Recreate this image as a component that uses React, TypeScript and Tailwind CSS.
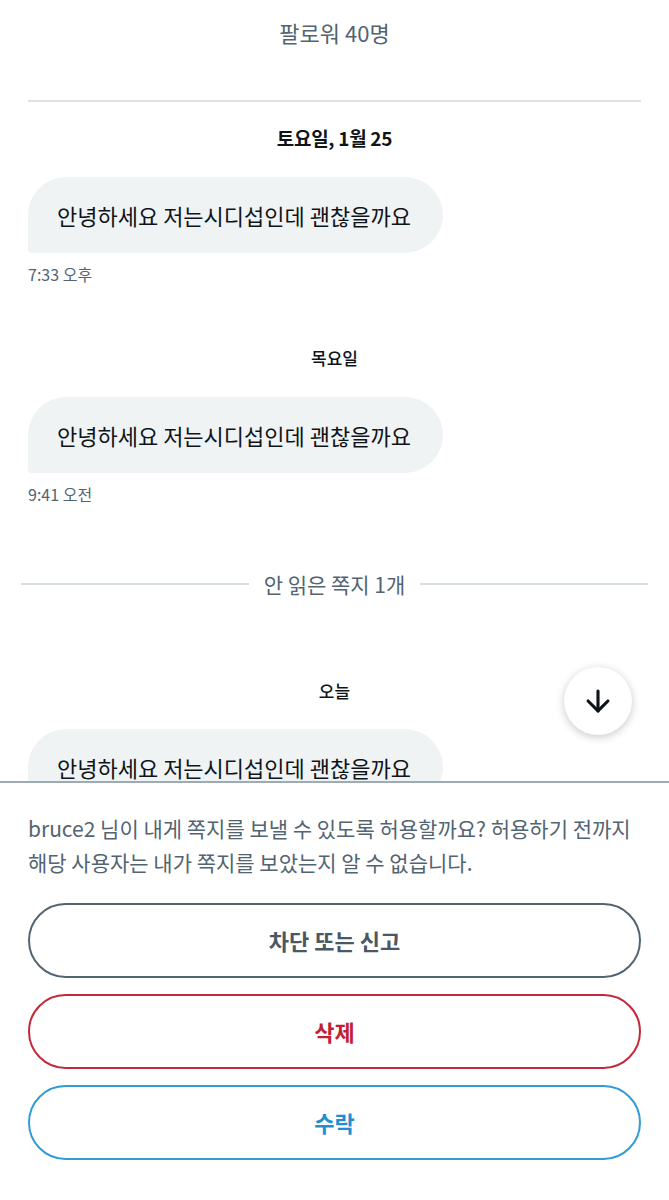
import React from 'react';
import { ArrowDown } from 'lucide-react';

const FONT = { fontFamily: '"Noto Sans CJK KR", "Noto Sans", sans-serif' };

const Bubble: React.FC<{ text: string }> = ({ text }) => (
  <div className="mx-[28px] flex h-[76px] w-[415px] items-center rounded-[38px] rounded-bl-[4px] bg-[#eff3f4] px-[29px]">
    <span className="whitespace-nowrap text-[22px] leading-none text-[#0f1419]">{text}</span>
  </div>
);

const DayLabel: React.FC<{ label: string; className?: string }> = ({ label, className }) => (
  <div className={'h-[28px] text-center leading-[28px] text-[#0f1419] ' + (className || '')}>
    {label}
  </div>
);

const Time: React.FC<{ time: string }> = ({ time }) => (
  <div className="mx-[28px] mt-[10px] h-[22px] text-[16px] leading-[22px] text-[#536471]">{time}</div>
);

const App: React.FC = () => {
  const msg = '안녕하세요 저는시디섭인데 괜찮을까요';

  return (
    <div className="flex h-[1200px] w-[669px] flex-col overflow-hidden bg-white" style={FONT}>
      <div className="relative flex-1 overflow-hidden">
        <div className="pt-[17px] text-center text-[22px] leading-[30px] text-[#536471]">팔로워 40명</div>
        <div className="mx-[28px] mt-[53px] h-[2px] bg-[#dfe3e6]" />

        <DayLabel label="토요일, 1월 25" className="mt-[22px] text-[19px] font-bold tracking-[-0.3px]" />
        <div className="mt-[25px]">
          <Bubble text={msg} />
        </div>
        <Time time="7:33 오후" />

        <DayLabel label="목요일" className="mt-[59px] text-[17px] font-medium" />
        <div className="mt-[25px]">
          <Bubble text={msg} />
        </div>
        <Time time="9:41 오전" />

        <div className="mt-[64px] flex h-[30px] items-center px-[21px]">
          <div className="h-[2px] flex-1 bg-[#d5dde2]" />
          <span className="px-[15px] text-[21px] leading-[30px] text-[#536471]">안 읽은 쪽지 1개</span>
          <div className="h-[2px] flex-1 bg-[#d5dde2]" />
        </div>

        <DayLabel label="오늘" className="mt-[78px] text-[17px] font-medium" />
        <div className="mt-[24px]">
          <Bubble text={msg} />
        </div>

        <button className="absolute left-[564px] top-[667px] flex h-[68px] w-[68px] items-center justify-center rounded-full bg-white shadow-[0_2px_8px_rgba(0,0,0,0.22)]">
          <ArrowDown size={34} strokeWidth={2.2} color="#0f1419" />
        </button>
      </div>

      <div className="h-[419px] border-t-2 border-[#9eabb5] bg-white px-[28px] pt-[28px]">
        <p className="break-keep text-[21px] leading-[34px] text-[#536471]">
          bruce2 님이 내게 쪽지를 보낼 수 있도록 허용할까요? 허용하기 전까지 해당 사용자는 내가 쪽지를 보았는지 알 수 없습니다.
        </p>
        <div className="mt-[24px] flex flex-col gap-[16px]">
          <button className="h-[75px] w-full rounded-full border-2 border-[#536471] text-[22px] font-bold text-[#4a5863]">
            차단 또는 신고
          </button>
          <button className="h-[75px] w-full rounded-full border-2 border-[#c22a3a] text-[22px] font-bold text-[#c21f33]">
            삭제
          </button>
          <button className="h-[75px] w-full rounded-full border-2 border-[#2f9bd7] text-[22px] font-bold text-[#1f8fd1]">
            수락
          </button>
        </div>
      </div>
    </div>
  );
};

export default App;
